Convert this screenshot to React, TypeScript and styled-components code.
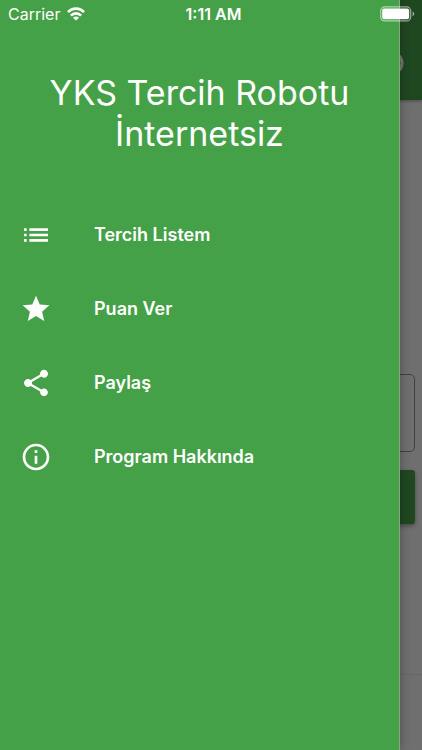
import React from "react";
import styled, { createGlobalStyle } from "styled-components";
import { MdInfoOutline, MdList, MdShare, MdStar } from "react-icons/md";

const GlobalStyle = createGlobalStyle`
  *, *::before, *::after { box-sizing: border-box; }
  body {
    margin: 0;
    font-family: Inter, "Liberation Sans", sans-serif;
    color: #fff;
    -webkit-font-smoothing: antialiased;
  }
`;

const Screen = styled.div`
  position: relative;
  display: flex;
  min-height: 100vh;
  overflow: hidden;
  background: #706f70;
`;

/* Page that lies under the open drawer, already dimmed by the scrim. */
const DimmedPage = styled.div`
  flex: 1;
  display: flex;
  flex-direction: column;
`;

const AppBar = styled.div`
  display: flex;
  align-items: center;
  justify-content: flex-end;
  height: 100px;
  padding: 26px 18px 0 0;
  background: #1f4821;
  box-shadow: 0 1px 3px rgba(0, 0, 0, 0.35);
  color: #6f7a70;
`;

const Form = styled.div`
  flex: 1;
  display: flex;
  flex-direction: column;
  gap: 18px;
  padding: 274px 7px 0;
`;

const Field = styled.input`
  width: 100%;
  height: 78px;
  border: 1px solid #414141;
  border-radius: 5px;
  background: transparent;
`;

const Submit = styled.button`
  width: 100%;
  height: 54px;
  border: 0;
  border-radius: 3px;
  background: #1f4821;
  box-shadow: 0 2px 4px rgba(0, 0, 0, 0.35);
`;

const PageFooter = styled.div`
  height: 76px;
  border-top: 1px solid #676667;
`;

const Drawer = styled.aside`
  position: absolute;
  top: 0;
  bottom: 0;
  left: 0;
  width: calc(100% - 22px);
  padding: 72px 0 0;
  border-right: 1px solid #8aa78b;
  background: #45a147;
  box-shadow: 0 0 10px rgba(0, 0, 0, 0.3);
`;

const Title = styled.h1`
  margin: 0 16px;
  font-size: 34px;
  font-weight: 400;
  line-height: 41px;
  text-align: center;
`;

const Menu = styled.nav`
  display: flex;
  flex-direction: column;
  margin-top: 44px;
`;

const MenuLink = styled.a`
  display: flex;
  align-items: center;
  gap: 42px;
  height: 74px;
  padding: 0 20px;
  color: inherit;
  font-size: 18px;
  font-weight: 600;
  line-height: 24px;
  text-decoration: none;
`;

const StatusBar = styled.header`
  position: absolute;
  top: 0;
  left: 0;
  right: 0;
  z-index: 2;
  display: grid;
  grid-template-columns: 1fr auto 1fr;
  align-items: center;
  height: 28px;
  padding: 0 7px 0 8px;
  font-size: 16px;
  line-height: 20px;
`;

const Network = styled.div`
  display: flex;
  align-items: center;
  gap: 7px;
`;

const Clock = styled.time`
  padding-left: 4px;
  font-weight: 600;
`;

const BatteryIcon = styled.svg`
  justify-self: end;
`;

const items = [
  { label: "Tercih Listem", icon: MdList },
  { label: "Puan Ver", icon: MdStar },
  { label: "Paylaş", icon: MdShare },
  { label: "Program Hakkında", icon: MdInfoOutline },
];

export default function App() {
  return (
    <>
      <GlobalStyle />
      <Screen>
        <DimmedPage inert>
          <AppBar>
            <svg width="26" height="26" viewBox="0 0 26 26" fill="none">
              <circle cx="13" cy="13" r="11" stroke="currentColor" strokeWidth="3" />
            </svg>
          </AppBar>
          <Form>
            <Field type="text" aria-label="Puan" />
            <Submit type="button" aria-label="Ara" />
          </Form>
          <PageFooter />
        </DimmedPage>
        <Drawer>
          <Title>YKS Tercih Robotu İnternetsiz</Title>
          <Menu>
            {items.map(({ label, icon: Icon }) => (
              <MenuLink key={label} href="#">
                <Icon size={32} aria-hidden />
                {label}
              </MenuLink>
            ))}
          </Menu>
        </Drawer>
        <StatusBar>
          <Network>
            Carrier
            <svg width="18" height="14" viewBox="0 0 18 14" fill="none" stroke="#fff" strokeWidth="2.7">
              <path d="M1 5.2C5.4 .4 12.6 .4 17 5.2" />
              <path d="M3.9 8.7C6.8 5.6 11.2 5.6 14.1 8.7" />
              <path d="M9 13.6L6 10.7C7.7 9.1 10.3 9.1 12 10.7Z" fill="#fff" stroke="none" />
            </svg>
          </Network>
          <Clock>1:11 AM</Clock>
          <BatteryIcon width="35" height="16" viewBox="0 0 35 16" fill="none">
            <rect x="0.7" y="0.9" width="30" height="14" rx="4" stroke="#fff" strokeOpacity="0.55" strokeWidth="1.2" />
            <rect x="2.2" y="2.6" width="27" height="10.6" rx="2" fill="#fff" />
            <path d="M32.6 5.6C34.8 6.4 34.8 9.4 32.6 10.2Z" fill="#fff" fillOpacity="0.55" />
          </BatteryIcon>
        </StatusBar>
      </Screen>
    </>
  );
}
